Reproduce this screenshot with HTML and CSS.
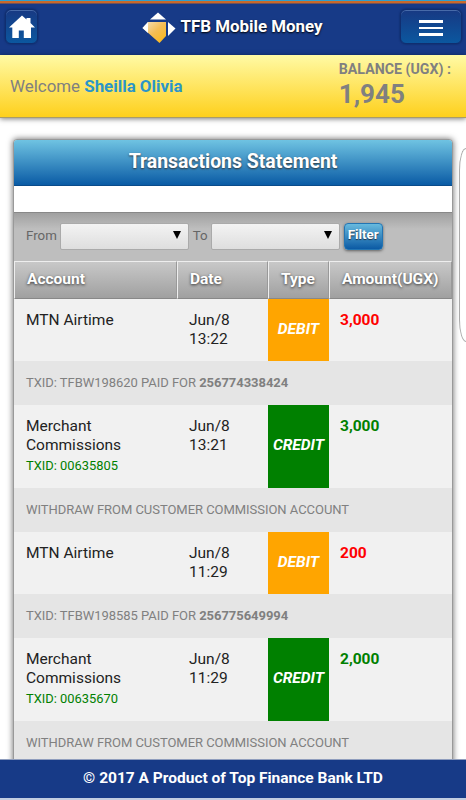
FILE: index.html
```html
<!DOCTYPE html>
<html lang="en">
<head>
    <meta charset="UTF-8">
    <meta name="viewport" content="width=device-width, initial-scale=1.0">
    <title>TFB Mobile Money</title>
    <link rel="stylesheet" href="styles.css">
</head>
<body>
    <header class="topbar">
        <a class="nav-btn home" href="#" aria-label="Home">
            <svg width="26" height="24" viewBox="0 0 26 24"><path fill="#fff" d="M13 .5 0 12.5h3.300V23h6.500v-7.500h5V23H22V12.500h4L21.500 8V3h-4v1.500z"/></svg>
        </a>
        <div class="brand">
            <svg width="34" height="32" viewBox="0 0 34 32">
                <defs>
                    <linearGradient id="gold" x1="0" y1="0" x2="1" y2="1">
                        <stop offset="0" stop-color="#f4e3c3"/>
                        <stop offset=".5" stop-color="#f5bd55"/>
                        <stop offset="1" stop-color="#fdb913"/>
                    </linearGradient>
                </defs>
                <path fill="#fff" d="M16 .5 24 7.500H8z"/>
                <path fill="#fff" d="M26 10v14l7.500-7.500z"/>
                <path fill="url(#gold)" d="M6 10h18v14l-6.500 7L.5 16z"/>
                <path fill="#fff" d="M6 10v11L.5 16z"/>
            </svg>
            <span>TFB Mobile Money</span>
        </div>
        <button class="nav-btn menu" aria-label="Menu"><i></i><i></i><i></i></button>
    </header>

    <section class="welcome">
        <div class="user">Welcome <b>Sheilla Olivia</b></div>
        <div class="balance">
            <div class="balance-label">BALANCE (UGX) :</div>
            <div class="balance-value">1,945</div>
        </div>
    </section>

    <main>
        <div class="panel">
            <h1>Transactions Statement</h1>
            <div class="spacer"></div>
            <form class="filter">
                <label>From</label>
                <div class="select"></div>
                <label>To</label>
                <div class="select"></div>
                <button type="button" class="filter-btn">Filter</button>
            </form>
            <div class="row head">
                <div>Account</div><div>Date</div><div>Type</div><div>Amount(UGX)</div>
            </div>

            <div class="row">
                <div>MTN Airtime</div>
                <div>Jun/8<br>13:22</div>
                <div class="type debit">DEBIT</div>
                <div class="amount out">3,000</div>
            </div>
            <div class="note">TXID: TFBW198620 PAID FOR <b>256774338424</b></div>

            <div class="row tall">
                <div>Merchant Commissions<small>TXID: 00635805</small></div>
                <div>Jun/8<br>13:21</div>
                <div class="type credit">CREDIT</div>
                <div class="amount in">3,000</div>
            </div>
            <div class="note">WITHDRAW FROM CUSTOMER COMMISSION ACCOUNT</div>

            <div class="row">
                <div>MTN Airtime</div>
                <div>Jun/8<br>11:29</div>
                <div class="type debit">DEBIT</div>
                <div class="amount out">200</div>
            </div>
            <div class="note">TXID: TFBW198585 PAID FOR <b>256775649994</b></div>

            <div class="row tall">
                <div>Merchant Commissions<small>TXID: 00635670</small></div>
                <div>Jun/8<br>11:29</div>
                <div class="type credit">CREDIT</div>
                <div class="amount in">2,000</div>
            </div>
            <div class="note">WITHDRAW FROM CUSTOMER COMMISSION ACCOUNT</div>
        </div>
        <div class="edge-tab"></div>
    </main>

    <footer>© 2017 A Product of Top Finance Bank LTD</footer>
</body>
</html>
```
FILE: styles.css
```css
* {
    box-sizing: border-box;
}
body {
    margin: 0;
    height: 800px;
    overflow: hidden;
    display: flex;
    flex-direction: column;
    font-family: Roboto, sans-serif;
    font-size: 15.5px;
    line-height: 19.3px;
    color: #222;
    background: #fff;
}
button {
    font-family: inherit;
    padding: 0;
}

/* top bar */
.topbar {
    height: 55px;
    flex: none;
    display: flex;
    justify-content: space-between;
    align-items: flex-start;
    padding: 6px 4px 0 5px;
    background: linear-gradient(#2f9fd0 0 1px, #c8692c 1px 3px, #173a87 4px);
}
.nav-btn {
    height: 35px;
    margin-top: 3px;
    border: 1px solid #102e70;
    border-radius: 6px;
    background: linear-gradient(#173983, #0b579f);
    box-shadow: inset 0 1px 0 #476aa9, 0 0 2px #0a2255;
}
.home {
    width: 33px;
    display: flex;
    align-items: center;
    justify-content: center;
}
.menu {
    width: 62px;
    display: flex;
    flex-direction: column;
    align-items: center;
    justify-content: center;
    gap: 4px;
    padding-top: 3px;
}
.menu i {
    width: 24px;
    height: 2.5px;
    background: #fff;
}
.brand {
    display: flex;
    gap: 4px;
    padding: 6px 0 0 27px;
    color: #fff;
    font-size: 16.9px;
    font-weight: 700;
    line-height: 28px;
    text-shadow: 0 1px 2px #000;
}

/* welcome strip */
.welcome {
    height: 63px;
    flex: none;
    display: flex;
    justify-content: space-between;
    padding: 0 15px 0 10px;
    background: linear-gradient(#fffaa5, #fed01c);
    border-bottom: 1px solid #a99c68;
    box-shadow: 0 1px 5px rgba(0, 0, 0, 0.5);
    color: #808080;
}
.user {
    font-size: 16.9px;
    line-height: 62px;
}
.user b {
    color: #2b95c9;
}
.balance {
    font-weight: 700;
    padding-top: 4px;
}
.balance-label {
    font-size: 14.2px;
    line-height: 20px;
}
.balance-value {
    font-size: 26px;
    line-height: 30px;
}

/* statement panel */
main {
    flex: 1;
    min-height: 0;
    display: flex;
    justify-content: space-between;
    overflow: hidden;
    padding: 21px 0 0 13px;
}
.panel {
    width: 440px;
    height: 700px;
    flex: none;
    border: 1px solid #999;
    border-radius: 4px;
    box-shadow: 0 0 6px rgba(0, 0, 0, 0.6);
    background: #f1f1f1;
    overflow: hidden;
}
h1 {
    height: 46px;
    margin: 0;
    font-size: 19.4px;
    line-height: 43px;
    text-align: center;
    color: #fff;
    text-shadow: 0 1px 2px #333;
    background: linear-gradient(#6fc3e2, #0a5ba5);
    border-bottom: 1px solid #0a4b8a;
}
.spacer {
    height: 26px;
    background: #fff;
}
.filter {
    height: 49px;
    display: flex;
    padding: 10px 0 0 12px;
    background: linear-gradient(#a0a0a0, #bebebe 16px);
    border-top: 1px solid #888;
}
.filter label {
    color: #666;
    font-size: 13.3px;
    line-height: 26px;
}
.select {
    flex: none;
    width: 129px;
    height: 27px;
    margin: 0 4px 0 3px;
    border: 1px solid #aaa;
    border-radius: 2px;
    background: linear-gradient(#f3f3f3, #dedede);
    display: flex;
    align-items: center;
    justify-content: flex-end;
    padding: 0 7px 3px 0;
}
.select::after {
    content: "";
    border: 4px solid transparent;
    border-top: 8px solid #000;
    border-bottom: 0;
}
.filter-btn {
    width: 39px;
    height: 27px;
    color: #fff;
    font-size: 13.3px;
    font-weight: 700;
    line-height: 21px;
    padding-bottom: 4px;
    border: 1px solid #2375b3;
    border-radius: 4px;
    background: linear-gradient(#68bade, #0b5aa4);
    box-shadow: 0 1px 3px rgba(0, 0, 0, 0.5);
    text-shadow: 0 1px 1px #234;
}

.row {
    display: grid;
    grid-template-columns: 163px 91px 61px 1fr;
    height: 62px;
    background: #f1f1f1;
}
.row.tall {
    height: 83px;
}
.row > div {
    padding: 12px 12px 0;
}
.row > .amount {
    padding-left: 11px;
}
.row > .type {
    display: flex;
    align-items: center;
    justify-content: center;
    padding: 0;
    color: #fff;
    font-weight: 700;
    font-style: italic;
}
.row.tall > .type {
    padding-bottom: 2px;
}
.debit {
    background: #ffa500;
}
.credit {
    background: #008000;
}
.amount {
    font-weight: 700;
}
.out {
    color: #f00;
}
.in,
small {
    color: #008000;
}
small {
    display: block;
    font-size: 12.9px;
    line-height: 19px;
}
.note {
    height: 44px;
    padding-left: 12px;
    font-size: 13px;
    letter-spacing: -0.04px;
    line-height: 43px;
    color: #808080;
    background: #e5e5e5;
}
.row.head {
    height: 38px;
    color: #fff;
    font-weight: 700;
    text-shadow: 0 1px 3px #333;
}
.row.head > div {
    padding-top: 8px;
    background: linear-gradient(#c8c8c8, #a0a0a0);
    border: 1px solid #eee;
    border-right-color: #999;
    border-bottom-color: #888;
}

/* pull-out tab, cut off by the right edge */
.edge-tab {
    width: 7px;
    height: 194px;
    margin-top: 9px;
    border: 1px solid #aaa;
    border-right: 0;
    border-radius: 7px 0 0 7px / 22px 0 0 22px;
}

footer {
    height: 41px;
    flex: none;
    border-top: 1px solid #8f9dbd;
    border-bottom: 2px solid #c3cde0;
    background: #173a87;
    color: #fff;
    font-size: 15.5px;
    font-weight: 700;
    line-height: 36px;
    text-align: center;
}
```
